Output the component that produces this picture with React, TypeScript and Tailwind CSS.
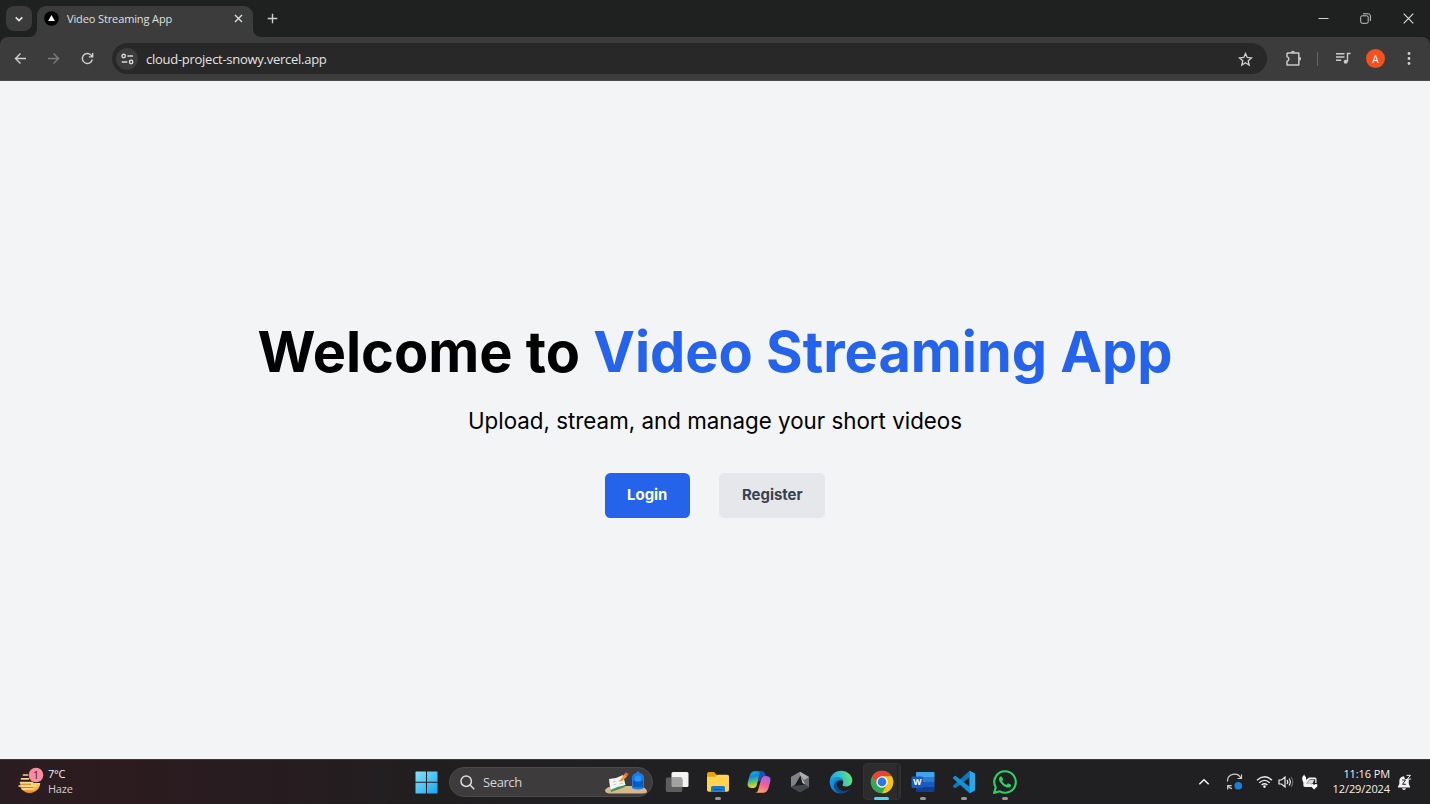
import type { ReactNode } from "react";

const UI = "font-['Open_Sans','Noto_Sans',sans-serif]";

function TabStrip() {
  return (
    <div className="flex h-[37px] shrink-0 items-start bg-[#1f2120]">
      <button className="ml-[6px] mt-[6px] flex h-[25px] w-[26px] items-center justify-center rounded-[8px] bg-[#3a3b3a]">
        <svg width="10" height="8" viewBox="0 0 10 8" fill="none" stroke="#e6e6e6" strokeWidth="1.6">
          <path d="M1.7 2.4 5 5.6l3.3-3.2" />
        </svg>
      </button>
      <div className="relative ml-[5px] mt-[6px] flex h-[31px] w-[216px] items-center rounded-t-[9px] bg-[#3c3c3c] pb-[6px]">
        <svg className="absolute -left-[8px] bottom-0" width="8" height="8" viewBox="0 0 8 8">
          <path d="M8 0v8H0a8 8 0 0 0 8-8Z" fill="#3c3c3c" />
        </svg>
        <svg className="absolute -right-[8px] bottom-0" width="8" height="8" viewBox="0 0 8 8">
          <path d="M0 0v8h8a8 8 0 0 1-8-8Z" fill="#3c3c3c" />
        </svg>
        <svg className="ml-[7px] shrink-0" width="15" height="15" viewBox="0 0 15 15">
          <circle cx="7.5" cy="7.5" r="7.3" fill="#000" />
          <path d="m7.5 3.9 3.4 6.100H4.100Z" fill="#fff" />
        </svg>
        <span className="ml-[8px] whitespace-nowrap text-[11px] leading-[14px] tracking-[-0.12px] text-[#dfe1e0]">Video Streaming App</span>
        <svg className="ml-auto mr-[10px]" width="9" height="9" viewBox="0 0 9 9" stroke="#dedede" strokeWidth="1.4">
          <path d="m1 1 7 7M8 1 1 8" />
        </svg>
      </div>
      <svg className="ml-[14px] mt-[13px]" width="11" height="11" viewBox="0 0 11 11" stroke="#d0d0d0" strokeWidth="1.4">
        <path d="M5.5 .7v9.6M.7 5.5h9.6" />
      </svg>
      <div className="ml-auto mr-[16px] mt-[13px] flex h-[11px] items-center text-white">
        <svg width="11" height="11" viewBox="0 0 11 11" stroke="#d0d0d0" strokeWidth="1">
          <path d="M.5 5.5h10" />
        </svg>
        <svg className="ml-[31px]" width="11" height="11" viewBox="0 0 11 11" fill="none" stroke="#c4c4c4" strokeWidth="1">
          <rect x=".7" y="2.8" width="7.5" height="7.5" rx="1.5" />
          <path d="M3 .8h5.2a2.2 2.2 0 0 1 2.2 2.2v5" />
        </svg>
        <svg className="ml-[32px]" width="11" height="11" viewBox="0 0 11 11" stroke="#e0e0e0" strokeWidth="1.1">
          <path d="m.7.7 9.6 9.6M10.3.7.7 10.3" />
        </svg>
      </div>
    </div>
  );
}

function Toolbar() {
  return (
    <div className="shrink-0 bg-[#1f2120]">
      <div className="flex h-[44px] items-center rounded-t-[8px] border-b border-[#4a4a4a] bg-[#3c3c3c]">
        <svg className="ml-[14px]" width="13" height="13" viewBox="0 0 13 13" fill="none" stroke="#cfcfcf" strokeWidth="1.4">
          <path d="M12 6.5H1.6M6.5 1.5l-5 5 5 5" />
        </svg>
        <svg className="ml-[20px]" width="13" height="13" viewBox="0 0 13 13" fill="none" stroke="#7c7c7c" strokeWidth="1.4">
          <path d="M1 6.5h10.4M6.5 1.5l5 5-5 5" />
        </svg>
        <svg className="ml-[21px]" width="13" height="13" viewBox="0 0 13 13" fill="none" stroke="#cfcfcf" strokeWidth="1.4">
          <path d="M11.3 7.4A5 5 0 1 1 9.9 2.9L11.5 4.500M11.700.9v4H7.900" />
        </svg>
        <div className="ml-[18px] flex h-[31px] w-[1155px] items-center rounded-full bg-[#282828]">
          <div className="ml-[4px] flex h-[22px] w-[22px] items-center justify-center rounded-full bg-[#3c3c3c]">
            <svg width="13" height="12" viewBox="0 0 13 12" fill="none" stroke="#d8d8d8" strokeWidth="1.4">
              <circle cx="2.7" cy="3" r="1.7" />
              <path d="M6.4 3H12M.7 9h5.600" />
              <circle cx="10.100" cy="9" r="1.700" />
            </svg>
          </div>
          <span className="ml-[8px] text-[13px] leading-[18px] tracking-[-0.27px] text-[#e3e3e3]">cloud-project-snowy.vercel.app</span>
          <svg className="ml-auto mr-[14px] mt-px" width="15" height="15" viewBox="0 0 15 15" fill="none" stroke="#d0d0d0" strokeWidth="1.300">
            <path d="m7.500 1.500 1.700 4 4.300.4-3.300 2.800 1 4.300-3.700-2.300L3.800 13l1-4.300L1.500 5.900l4.300-.4Z" />
          </svg>
        </div>
        <svg className="ml-[18px]" width="17" height="17" viewBox="0 0 17 17" fill="none" stroke="#c8c8c8" strokeWidth="1.500">
          <path d="M2 3h11.800v4.500M13.800 10v4.900H2v-3.600a2.300 2.300 0 0 0 0-4.500V3M13.800 7v4" strokeLinejoin="round" />
          <path d="M5.900 2.700a2 2 0 0 1 4 0ZM14.100 6.800a2 2 0 0 1 0 4Z" fill="#c8c8c8" stroke="none" />
        </svg>
        <div className="ml-[15px] h-[14px] w-px bg-[#646464]" />
        <svg className="ml-[18px]" width="15" height="13" viewBox="0 0 15 13" fill="none" stroke="#cccccc" strokeWidth="1.400">
          <path d="M0 1.800h8.500M0 5h8.500M0 8.200h5.200M14.500 1.500h-3v8" />
          <circle cx="9.700" cy="9.800" r="2" fill="#cccccc" stroke="none" />
        </svg>
        <div className="ml-[15px] flex h-[19px] w-[19px] items-center justify-center rounded-full bg-[#f4511e] text-[10px] leading-none text-white">A</div>
        <svg className="ml-[22px]" width="4" height="15" viewBox="0 0 4 15" fill="#d0d0d0">
          <circle cx="2" cy="2.500" r="1.400" />
          <circle cx="2" cy="7.500" r="1.400" />
          <circle cx="2" cy="12.500" r="1.400" />
        </svg>
      </div>
    </div>
  );
}

function Welcome() {
  return (
    <main className="flex flex-1 flex-col items-center bg-[#f3f4f6] pt-[243px] font-[Inter,sans-serif] text-black">
      <h1 className="whitespace-nowrap text-[55.9px] font-bold leading-[56px]">
        Welcome to <span className="text-[#2563eb]">Video Streaming App</span>
      </h1>
      <p className="mt-[26px] whitespace-nowrap text-[22.35px] leading-[30px]">Upload, stream, and manage your short videos</p>
      <div className="mt-[36.500px] flex gap-[29.5px] text-[14.9px] font-bold leading-[22px]">
        <a className="flex h-[45px] w-[85px] items-center justify-center rounded-[5.500px] bg-[#2563eb] text-white">Login</a>
        <a className="flex h-[45px] w-[106px] items-center justify-center rounded-[5.500px] bg-[#e5e7eb] text-[#374151]">Register</a>
      </div>
    </main>
  );
}

function TaskItem({ children, mark }: { children: ReactNode; mark?: "open" | "active" }) {
  return (
    <div className="relative flex h-[44px] w-[41px] shrink-0 items-center justify-center">
      {mark === "active" && <div className="absolute left-[2px] top-[3px] h-[37px] w-[38px] rounded-[4px] border border-[#333333] bg-[#2c2c2d]" />}
      {mark === "active" && <div className="absolute left-[36px] top-[4px] h-[35px] w-px bg-[#202022]" />}
      <div className="relative">{children}</div>
      {mark === "open" && <div className="absolute bottom-[4px] left-[17.500px] h-[3px] w-[6px] rounded-full bg-[#98989a]" />}
      {mark === "active" && <div className="absolute bottom-[4px] left-[13px] h-[3px] w-[15px] rounded-full bg-[#4cd8f0]" />}
    </div>
  );
}

function WeatherIcon() {
  return (
    <svg className="-mt-[2px]" width="28" height="28" viewBox="0 0 28 28">
      <defs>
        <linearGradient id="haze" x1="0" y1="0" x2="0" y2="1">
          <stop offset="0" stopColor="#ffd763" />
          <stop offset="1" stopColor="#ee8d1c" />
        </linearGradient>
      </defs>
      <path d="M3 16h20.300a10.500 10.500 0 0 1-19 5.500Z" fill="url(#haze)" />
      <path d="M6.500 8h4M4.500 11.800h7M3.500 15.500h12" stroke="#f7d68f" strokeWidth="1.700" strokeLinecap="round" />
      <path d="M2 19h17M5 22h12" stroke="#f9dda0" strokeWidth="1.400" strokeLinecap="round" />
      <path d="M3 17.300h11M3 20.500h13" stroke="#c47525" strokeWidth=".8" />
      <circle cx="19" cy="8" r="7.300" fill="#fb8c9e" />
      <text x="19" y="11.700" textAnchor="middle" fontSize="10.500" fill="#40222b" fontFamily="Open Sans, sans-serif">1</text>
    </svg>
  );
}

function StartIcon() {
  return (
    <svg className="block" width="23" height="23" viewBox="0 0 23 23">
      <defs>
        <linearGradient id="win" x1="0" y1="0" x2="1" y2="1">
          <stop offset="0" stopColor="#86e2fb" />
          <stop offset="1" stopColor="#18a5f1" />
        </linearGradient>
      </defs>
      <path fill="url(#win)" d="M1 .5h10v10.300H.5V1ZM12 .5h10q.5 0 .5.500v9.800H12ZM.5 11.800H11v10.700H1q-.5 0-.5-.5ZM12 11.800h10.500V22q0 .5-.5.500H12Z" />
    </svg>
  );
}

function SearchArt() {
  return (
    <svg className="ml-auto mr-[4px]" width="44" height="26" viewBox="0 0 44 26">
      <path d="M1 21q2-3.500 9-4h24q8 1 9 5 0 2.500-4 2.500H5q-4-.5-4-3.500Z" fill="#d9b78c" />
      <path d="m5 12 14-5 2 11-14 5Z" fill="#3b9360" />
      <path d="m5 10 7-1 7-3 2.500 10-8 2-7 3Z" fill="#f3f6ee" />
      <path d="m9 13 3-1m-2.500 4 3-1m2-3 4-1m-3 4 4-1" stroke="#a9b6b2" strokeWidth=".7" />
      <path d="m16 11 4.500-6 3 1.700-5 5.300-3 .800Z" fill="#ef9b32" />
      <path d="m20 5.500 1.700-2.300 3 1.600-1.700 2.500Z" fill="#ef5551" />
      <path d="M28 19V9q0-4 4-5l2-2 2 2q4 1 4 5v10q-6 3-12 0Z" fill="#157ce9" />
      <path d="M29 12q5-3 10 0v6H29Z" fill="#075dbe" />
      <path d="M31 8q3-3 6 0v4q-3 1-6 0Z" fill="#2895fa" />
    </svg>
  );
}

function TaskViewIcon() {
  return (
    <svg className="block" width="24" height="22" viewBox="0 0 24 22">
      <rect x="6.500" y="1" width="17" height="15" rx="1.500" fill="#f3f3f3" />
      <rect x=".8" y="6.500" width="16.500" height="14.500" rx="1.500" fill="#5d5d5d" />
      <path d="M6.500 6.500h9.300q1.500 0 1.500 1.500v8H8q-1.500 0-1.500-1.500Z" fill="#a2a2a2" />
    </svg>
  );
}

function FolderIcon() {
  return (
    <svg className="block" width="24" height="22" viewBox="0 0 24 22">
      <path d="M1 3q0-2 2-2h5l3 3h10q2 0 2 2v5H1Z" fill="#e8a00c" />
      <path d="M1 5.800h8.500l2-2H21q2 0 2 2V19q0 1.800-2 1.800H3q-2 0-2-1.800Z" fill="#ffd34d" />
      <path d="M5 20.800v-4.300q0-1.500 1.500-1.500h11q1.500 0 1.500 1.500v4.300Z" fill="#1578c8" />
      <path d="M8 18h8v1H8Z" fill="#064c8b" />
    </svg>
  );
}

function CopilotIcon() {
  return (
    <svg className="block" width="24" height="24" viewBox="0 0 24 24">
      <defs>
        <linearGradient id="copA" x1="0" y1="0" x2=".2" y2="1">
          <stop offset="0" stopColor="#12b9e8" />
          <stop offset=".35" stopColor="#1786dc" />
          <stop offset=".7" stopColor="#5fc56d" />
          <stop offset="1" stopColor="#ffd11c" />
        </linearGradient>
        <linearGradient id="copB" x1=".7" y1="0" x2=".2" y2="1">
          <stop offset="0" stopColor="#aa62e8" />
          <stop offset=".45" stopColor="#f05d9c" />
          <stop offset="1" stopColor="#ffad5b" />
        </linearGradient>
      </defs>
      <path d="M11 20.500 14.200 9q.9-3 3.500-3H19q3.500 0 4.300 2.500.4 1.500-.3 4L21.500 18q-1.100 4-4.500 4.700H8q2.300 0 3-2.200Z" fill="url(#copB)" />
      <path d="M13 3.500 9.800 15q-.9 3-3.500 3H5q-3.500 0-4.300-2.500-.4-1.500.3-4L2.500 6Q3.600 2 7 1.300h9q-2.300 0-3 2.200Z" fill="url(#copA)" />
      <path d="M11 1.300h4q2.500 0 3.200 2.400L19 6h-2q-2 0-2.700 2.300l-1 3.200-2.400-.8L13 3.500Z" fill="#1455b7" />
    </svg>
  );
}

function HexIcon() {
  return (
    <svg className="block" width="22" height="22" viewBox="0 0 22 22">
      <path d="m11 .8 9 5.100v10.200l-9 5.100-9-5.100V5.900Z" fill="#686c71" />
      <path d="m11 .8 9 5.100-5 3-4-4.500Z" fill="#a9adb0" />
      <path d="M2 5.900 11 .8v4L6 14l-4 2.100Z" fill="#80848a" />
      <path d="m2 16.100 4-2.600h10l4 2.600-9 5.100Z" fill="#43474d" />
      <path d="m11.500 4.500 5 9L5.500 15Z" fill="#1b1d22" />
      <path d="m11.500 4.500 5 9-3-1.500Z" fill="#c0c4c7" />
    </svg>
  );
}

function EdgeIcon() {
  return (
    <svg className="block" width="24" height="24" viewBox="0 0 24 24">
      <defs>
        <linearGradient id="edgeTop" x1="0" y1=".5" x2="1" y2=".3">
          <stop offset="0" stopColor="#20a4e8" />
          <stop offset=".5" stopColor="#35c4c9" />
          <stop offset="1" stopColor="#70e65c" />
        </linearGradient>
        <linearGradient id="edgeLow" x1="0" y1="0" x2="1" y2="1">
          <stop offset="0" stopColor="#1b9de2" />
          <stop offset="1" stopColor="#1266b5" />
        </linearGradient>
      </defs>
      <path d="M.7 11C1.500 4.500 6.500.7 12 .7c6.500 0 11.300 4.500 11.300 9.800 0 3.800-2.900 6-6.200 6-2.600 0-4-1-3.500-2 1.400-2 .7-5.800-3.100-6.500C6.200 7.100 2.500 8.500.7 11Z" fill="url(#edgeTop)" />
      <path d="M.7 11C2 8.300 5.200 7 8.500 7c3.500 0 5.600 1.900 5.900 4-4.200-1.900-7.200.5-6.700 4.200.6 4.500 4.600 7.600 8.500 6.900C8.500 26 .4 20.500.7 11Z" fill="url(#edgeLow)" />
      <path d="M10.500 10.500c-3 1.500-3.300 5-1.300 7.800 2.500 3.300 7.500 4.300 12 .2-2.500 4-7 5.300-10.300 4.400-4.200-1.200-6.300-4.900-5.900-8 .3-2.300 2.300-4.500 5.500-4.400Z" fill="#0c4c91" />
    </svg>
  );
}

function ChromeIcon() {
  return (
    <svg className="block" width="24" height="24" viewBox="0 0 24 24">
      <circle cx="12" cy="12" r="11.300" fill="#34a853" />
      <path d="M2.210 6.350A11.300 11.300 0 0 1 21.790 6.350H12L7.100 14.830Z" fill="#ea4335" />
      <path d="M21.790 6.350A11.300 11.300 0 0 1 12 23.300L16.900 14.830 12 6.350Z" fill="#fbc116" />
      <circle cx="12" cy="12" r="5.700" fill="#fff" />
      <circle cx="12" cy="12" r="4.400" fill="#2878e8" />
    </svg>
  );
}

function WordIcon() {
  return (
    <svg className="block" width="24" height="22" viewBox="0 0 24 22">
      <path d="M6 1h16.500q1 0 1 1v4H5V2q0-1 1-1Z" fill="#41a5ee" />
      <path d="M5 6h18.500v5H5Z" fill="#2b7cd3" />
      <path d="M5 11h18.500v5H5Z" fill="#185abd" />
      <path d="M5 16h18.500v4q0 1-1 1H6q-1 0-1-1Z" fill="#103f91" />
      <rect x=".5" y="5.500" width="11.500" height="11.500" rx="1.200" fill="#185abd" />
      <text x="6.250" y="14.300" textAnchor="middle" fontSize="8.500" fontWeight="700" fill="#fff" fontFamily="Open Sans, sans-serif">W</text>
    </svg>
  );
}

function CodeIcon() {
  return (
    <svg className="block" width="24" height="24" viewBox="0 0 24 24">
      <path d="m17.500.8 5 2.400q.6.300.6 1v15.600q0 .7-.6 1l-5 2.400Z" fill="#27a5ee" />
      <path d="M17.500.8 1.200 15.500q-.6.600 0 1.200l1.400 1.200q.6.500 1.200.1L18 7Z" fill="#0c78bd" />
      <path d="M17.500 23.200 1.200 8.500q-.6-.6 0-1.200l1.400-1.200q.6-.5 1.200-.1L18 17Z" fill="#1690d4" />
      <path d="m17.500.8 5 2.400q.6.300.6 1v15.600q0 .7-.6 1l-5 2.400Z" fill="#29a8ee" opacity=".65" />
    </svg>
  );
}

function WhatsAppIcon() {
  return (
    <svg className="block" width="24" height="24" viewBox="0 0 24 24" fill="#2ad366">
      <path d="M17.472 14.382c-.297-.149-1.758-.867-2.030-.967-.273-.099-.471-.148-.670.150-.197.297-.767.966-.940 1.164-.173.199-.347.223-.644.075-.297-.150-1.255-.463-2.390-1.475-.883-.788-1.480-1.761-1.653-2.059-.173-.297-.018-.458.130-.606.134-.133.298-.347.446-.520.149-.174.198-.298.298-.497.099-.198.050-.371-.025-.520-.075-.149-.669-1.612-.916-2.207-.242-.579-.487-.500-.669-.510a12.800 12.800 0 0 0-.570-.010c-.198 0-.520.074-.792.372-.272.297-1.040 1.016-1.040 2.479 0 1.462 1.065 2.875 1.213 3.074.149.198 2.096 3.200 5.077 4.487.709.306 1.262.489 1.694.625.712.227 1.360.195 1.871.118.571-.085 1.758-.719 2.006-1.413.248-.694.248-1.289.173-1.413-.074-.124-.272-.198-.570-.347" />
      <path d="M12 1.300a10.700 10.700 0 0 0-9.300 16L1.200 22.800l5.600-1.500A10.700 10.700 0 1 0 12 1.300Z" fill="none" stroke="#2ad366" strokeWidth="2.100" />
    </svg>
  );
}

function Tray() {
  return (
    <div className="ml-auto flex h-full items-center text-[#f0f0f0]">
      <svg width="12" height="8" viewBox="0 0 12 8" fill="none" stroke="#f2f2f2" strokeWidth="1.500">
        <path d="m1.300 6.300 4.700-4.600 4.700 4.600" />
      </svg>
      <svg className="ml-[16px]" width="18" height="18" viewBox="0 0 18 18" fill="none" stroke="#cfcfcf" strokeWidth="1.200">
        <path d="M1.500 8.500A7 7 0 0 1 14.800 5.200M15.500 1.500v4h-4M1.700 16.500v-3.800h4M2 13.200a7 7 0 0 0 4 2.500" />
        <circle cx="12.300" cy="12.700" r="3.800" fill="#1683dc" stroke="none" />
      </svg>
      <svg className="ml-[12px]" width="17" height="14" viewBox="0 0 17 14" fill="none" stroke="#eeeeee" strokeWidth="1.300">
        <path d="M1 5.200q7.500-7 15 0M3.300 7.700q5.200-4.700 10.400 0M5.600 10.100q2.900-2.600 5.800 0" />
        <circle cx="8.500" cy="11.600" r="1.300" fill="#eee" stroke="none" />
      </svg>
      <svg className="ml-[5px]" width="16" height="14" viewBox="0 0 16 14" fill="none" stroke="#eeeeee" strokeWidth="1.200">
        <path d="M1 5h2.500L7 2v10L3.500 9H1ZM9 5q1.600 2 0 4M11 3.500q2.700 3.500 0 7" />
        <path d="M13 2q3.600 5 0 10" stroke="#666" />
      </svg>
      <svg className="ml-[7px]" width="18" height="17" viewBox="0 0 18 17">
        <path d="M2.500 5.500h3L8 3.500h6q1.500 0 1.500 1.500v4h-1.300V5.200H8.800L5.500 9.500h4.800V13H4q-1.700 0-1.700-1.800Z" fill="#f0f0f0" />
        <path d="m5.500 9.800 3.300-4h4.500l-1.800 4Z" fill="#d7d7d7" />
        <path d="M1.200 5.500q-.7-2.500 2.100-5Q3.400 2.400 5 3v4L2.300 8.500Z" fill="#fff" />
        <path d="m13.100 15.400-3-3q-.8-1.600.7-2.300 1.500-.5 2.300.9.900-1.400 2.400-.9 1.500.8.700 2.300Z" fill="#fff" />
      </svg>
      <div className="-mt-[2px] ml-[9px] w-[62px] text-right text-[11px] leading-[15px] tracking-[-0.100px]">
        <div className="whitespace-nowrap">11:16 PM</div>
        <div className="flex justify-end whitespace-nowrap">12/29/2024</div>
      </div>
      <svg className="ml-[7px] mr-[17px]" width="16" height="17" viewBox="0 0 16 17">
        <path d="M7 2.200q-4.700.5-4.700 5V10L1 12.500v1h12v-1L11.800 10V5H8Z" fill="#f2f2f2" />
        <path d="M5 14.200h4q-.2 1.800-2 1.800t-2-1.800Z" fill="#f2f2f2" />
        <path d="M5 6h3.500l-3 4.300H9" fill="none" stroke="#29272a" strokeWidth="1" />
        <path d="M9.500 1.300h4L10.300 5H14" fill="none" stroke="#eee" strokeWidth="1" />
      </svg>
    </div>
  );
}

function Taskbar() {
  return (
    <footer className="flex h-[45px] shrink-0 items-center border-t border-[#3a3839] bg-[linear-gradient(90deg,#2a1d21_0%,#2c1b1f_8%,#271c1f_18%,#221e20_28%,#202022_45%,#202022_100%)]">
      <div className="flex w-[405.5px] shrink-0 items-center pl-[17px] text-[11px] leading-[15px] text-[#f2f2f2]">
        <WeatherIcon />
        <div className="-mt-[2px] ml-[3px]">
          <div className="tracking-[-0.200px]">7°C</div>
          <div className="tracking-[-0.250px] text-[#d2cccd]">Haze</div>
        </div>
      </div>
      <TaskItem><StartIcon /></TaskItem>
      <div className="ml-[2.500px] flex h-[30px] w-[204px] shrink-0 items-center rounded-full border border-[#4b494a] bg-[#3d3b3c]">
        <svg className="ml-[10px]" width="15" height="15" viewBox="0 0 15 15" fill="none" stroke="#dddddd" strokeWidth="1.500">
          <circle cx="6.200" cy="6.200" r="5.200" />
          <path d="m10 10 4.300 4.300" />
        </svg>
        <span className="ml-[8px] text-[13px] leading-[18px] tracking-[-0.400px] text-[#d6d6d6]">Search</span>
        <SearchArt />
      </div>
      <div className="ml-[3px] flex shrink-0">
        <TaskItem><TaskViewIcon /></TaskItem>
        <TaskItem mark="open"><FolderIcon /></TaskItem>
        <TaskItem><CopilotIcon /></TaskItem>
        <TaskItem><HexIcon /></TaskItem>
        <TaskItem><EdgeIcon /></TaskItem>
        <TaskItem mark="active"><ChromeIcon /></TaskItem>
        <TaskItem mark="open"><WordIcon /></TaskItem>
        <TaskItem mark="open"><CodeIcon /></TaskItem>
        <TaskItem mark="open"><WhatsAppIcon /></TaskItem>
      </div>
      <Tray />
    </footer>
  );
}

export default function App() {
  return (
    <div className={`flex h-[804px] w-[1430px] flex-col overflow-hidden ${UI}`}>
      <TabStrip />
      <Toolbar />
      <Welcome />
      <Taskbar />
    </div>
  );
}
